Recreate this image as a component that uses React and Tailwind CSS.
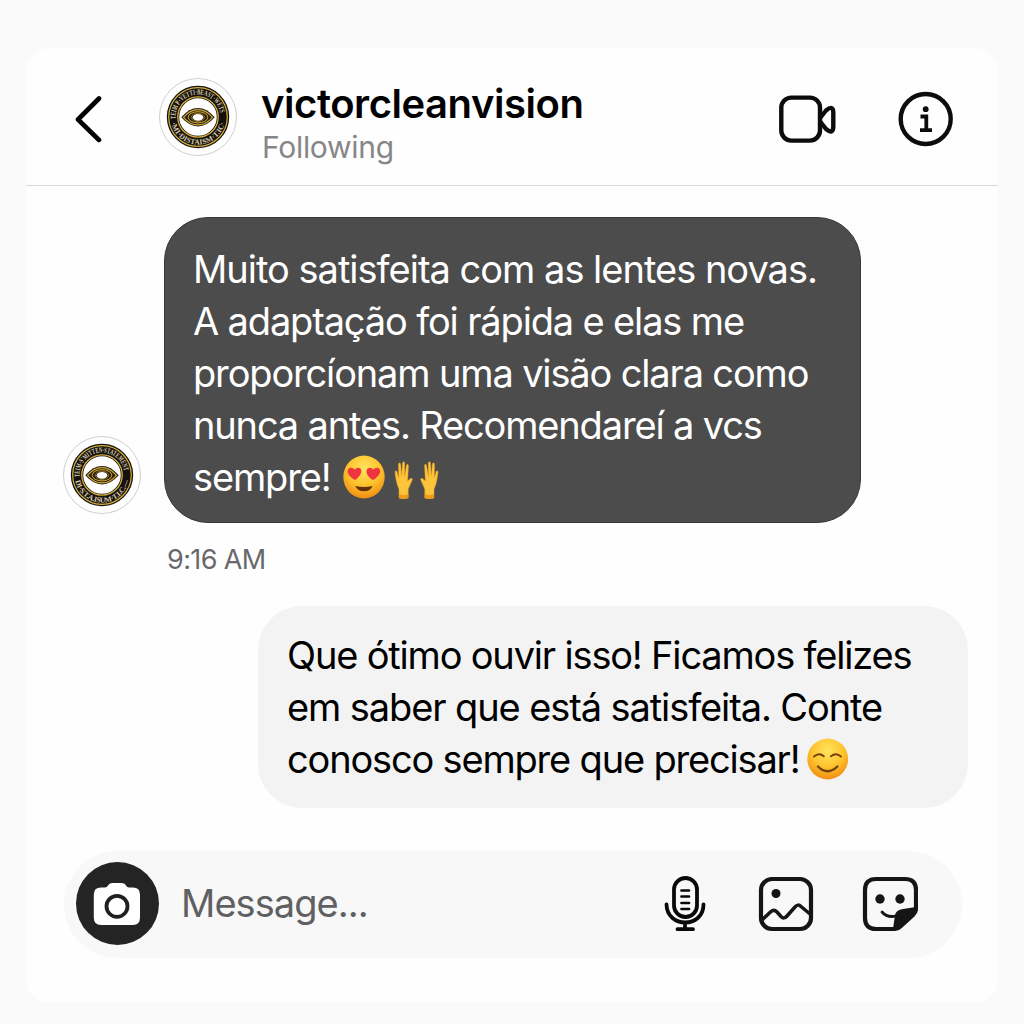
function Seal({ id, top, bottom }) {
  return (
    <svg viewBox="0 0 78 78" className="block size-[78px] shrink-0">
      <circle cx="39" cy="39" r="38.5" fill="#fefefe" stroke="#cfcfd1" strokeWidth="1" />
      <circle cx="39" cy="39" r="25" fill="none" stroke="#15120d" strokeWidth="12.4" />
      <circle cx="39" cy="39" r="29.3" fill="none" stroke="#d6b142" strokeWidth="1.2" />
      <circle cx="39" cy="39" r="20.2" fill="none" stroke="#d6b142" strokeWidth="1.3" />
      <path id={id + "t"} d="M16.700 41 A22.400 22.400 0 1 1 61.300 41" fill="none" />
      <path id={id + "b"} d="M12.300 45 A27.300 27.300 0 0 0 65.700 45" fill="none" />
      <g fill="#dccdb0" fontFamily="Liberation Serif, serif" fontWeight="700" fontSize="7.600">
        <text><textPath href={"#" + id + "t"} textLength="68" lengthAdjust="spacingAndGlyphs">{top}</textPath></text>
        <text><textPath href={"#" + id + "b"} textLength="74" lengthAdjust="spacing">{bottom}</textPath></text>
      </g>
      <path d="M22.300 39.300Q30 30 39 30T55.700 39.300Q48 48.400 39 48.400T22.300 39.300Z" fill="#2a210d" />
      <path d="M24.500 39.300Q31 31.600 39 31.600T53.500 39.300Q47 46.900 39 46.900T24.500 39.300Z" fill="none" stroke="#d0a93c" strokeWidth="1.100" />
      <ellipse cx="39" cy="39.300" rx="9.800" ry="5.600" fill="none" stroke="#d0a93c" strokeWidth="1" />
      <ellipse cx="39" cy="39.300" rx="6.600" ry="4.100" fill="none" stroke="#a98426" strokeWidth=".8" />
      <ellipse cx="39" cy="39.300" rx="5.300" ry="3.400" fill="#fff" />
    </svg>
  );
}

function FaceGradient({ id }) {
  return (
    <defs>
      <radialGradient id={id} cx="0.5" cy="0.3" r="0.72">
        <stop offset="0" stopColor="#ffe45e" />
        <stop offset="0.55" stopColor="#fdc32d" />
        <stop offset="1" stopColor="#f08a12" />
      </radialGradient>
    </defs>
  );
}

function HeartEyes() {
  return (
    <svg viewBox="0 0 42 44" className="h-11 w-[42px]">
      <FaceGradient id="face1" />
      <ellipse cx="21" cy="22" rx="20.7" ry="21.5" fill="url(#face1)" />
      <g fill="#f0343f">
        <path d="M12 25C8 23 3.300 18.500 5 14.800C6.500 12 10 12.300 11.700 14.800C14 12 17.500 12.300 18.200 15.200C19 19 15 23 12 25Z" />
        <path d="M30 25C26 23 22.500 18.500 23.800 15C25 12 29 12.300 30.300 14.800C32.500 12 36 12.300 37 15C38 19 33.500 23 30 25Z" />
      </g>
      <path d="M12.300 31Q21 33 29.600 31Q27.500 36.300 21 36.300T12.300 31Z" fill="#623009" />
    </svg>
  );
}

function Hand({ flip }) {
  return (
    <svg viewBox="0 0 19 38" className={flip ? "h-[38px] w-[19px] -scale-x-100" : "h-[38px] w-[19px]"}>
      <path d="M5 37V28C3 24 2 19 1 11.500C.8 9.500 2.500 9.300 3 11L4.700 17L4.500 3.500C4.500 1.500 6.500 1.500 6.700 3.500L7.600 15L8.600 2C8.800 .2 10.700 .5 10.700 2.300L10.600 15.500L12.500 4.500C12.900 2.700 14.600 3.200 14.400 5L13.600 20L15.800 18C17.500 16.600 19 17.700 18 19.500L14.200 28V37Q9.500 38.500 5 37Z" fill="#fcc43a" stroke="#f0a21f" strokeWidth=".5" />
      <path d="M5 33Q10 35 14.200 33V37Q9.500 38.500 5 37Z" fill="#ee9c1c" />
    </svg>
  );
}

function Smile() {
  return (
    <svg viewBox="0 0 42 42" className="size-[42px]">
      <FaceGradient id="face2" />
      <circle cx="20.700" cy="21" r="20.400" fill="url(#face2)" />
      <g fill="none" stroke="#74400c" strokeWidth="1.900" strokeLinecap="round">
        <path d="M7 18.500Q12 14 16.800 18.300M24 18.300Q29 14 34 18.500" />
        <path d="M11 28.500Q20.500 38 30.300 28.500" strokeWidth="2.400" />
      </g>
    </svg>
  );
}

function Line({ children }) {
  return <div className="flex h-[52px] items-center whitespace-pre">{children}</div>;
}

export default function App() {
  return (
    <main className="flex h-[1024px] w-[1024px] bg-[#fafafa] pt-12 pl-[26px] font-['Inter',sans-serif] text-black">
      <section className="flex h-[955px] w-[972px] flex-col rounded-[24px] bg-[#fefefe]">
        <header className="flex h-[138px] shrink-0 items-start border-b border-[#d6d6d8]">
          <svg viewBox="0 0 28 48" className="mt-[47px] ml-[49px] h-12 w-7" fill="none" stroke="#000" strokeWidth="4.600" strokeLinecap="round" strokeLinejoin="round">
            <path d="M24 3.500L3 24.500L24 45" />
          </svg>
          <div className="mt-[30px] ml-14 w-[102px]"><Seal id="head" top="TEIM P·VETTI·BEAST·WETS" bottom="·MI·DISTAISM·T.IC·" /></div>
          <div className="mt-[31px] w-[518px]">
            <h1 className="h-[49px] text-[40px] leading-[49px] font-semibold tracking-[-0.45px]">victorcleanvision</h1>
            <p className="pl-px text-[30px] leading-[38px] tracking-[-0.3px] text-[#868688]">Following</p>
          </div>
          <svg viewBox="0 0 58 50" className="mt-[47px] h-[50px] w-[58px]" fill="none" stroke="#0b0c0e" strokeWidth="4.400" strokeLinejoin="round">
            <rect x="2.300" y="2.600" width="38.700" height="43" rx="10" />
            <path d="M41.500 22.500L47 15.500Q54.300 9.500 54.300 17.500V31.500Q54.300 40 47 34L41.500 27" />
          </svg>
          <svg viewBox="0 0 56 56" className="mt-[43px] ml-[61px] size-14">
            <circle cx="27.700" cy="28" r="25" fill="none" stroke="#0b0c0e" strokeWidth="4.400" />
            <circle cx="27.700" cy="18.200" r="2.900" fill="#0b0c0e" />
            <path d="M22.500 25.500H28.300V39M22 39.200H34" fill="none" stroke="#0b0c0e" strokeWidth="3.800" />
          </svg>
        </header>

        <div className="mt-[31px] ml-[37px] flex items-end gap-[23px]">
          <div className="mb-[9px]"><Seal id="chat" top="TEIM·S'MITTEN·STATEMENT" bottom="DI·S.T.A.ISUM·T.I.C.—" /></div>
          <div className="h-[306px] w-[697px] rounded-[44px] border border-[#373737] bg-[#4c4c4c] pt-[25px] pl-[28px] text-[38px] tracking-[-1.15px] text-white">
            <div className="tracking-[-1px]"><Line>Muito satisfeita com as lentes novas.</Line></div>
            <Line>A adaptação foi rápida e elas me</Line>
            <Line>proporcíonam uma visão clara como</Line>
            <Line>nunca antes. Recomendareí a vcs</Line>
            <Line><span className="w-[150px]">sempre!</span><HeartEyes /><span className="ml-[9px] flex gap-[7px] pt-[6px]"><Hand /><Hand flip /></span></Line>
          </div>
        </div>
        <time className="mt-[18px] ml-[141px] h-[37px] text-[27px] leading-[38px] tracking-[-0.6px] text-[#68686a]">9:16 AM</time>

        <div className="mt-[28px] ml-[232px] h-[202px] w-[710px] shrink-0 rounded-[44px] bg-[#f3f3f3] pt-[23px] pl-[29px] text-[38px] tracking-[-1.18px]">
          <Line>Que ótimo ouvir isso! Ficamos felizes</Line>
          <div className="tracking-[-1.1px]"><Line>em saber que está satisfeita. Conte</Line></div>
          <Line><span className="w-[520px]">conosco sempre que precisar!</span><Smile /></Line>
        </div>

        <div className="mt-[43px] ml-[38px] flex h-[107px] w-[898px] shrink-0 items-center rounded-full bg-[#f8f8f8] pb-[2px] pl-3">
          <div className="flex size-[83px] items-center justify-center rounded-full bg-[#242424]">
            <svg viewBox="0 0 48 44" className="mr-px h-11 w-12">
              <path d="M8 5.500H12Q14 5.500 15 3.500Q16 1 19 1H29Q32 1 33 3.500Q34 5.500 36 5.500H40Q47 5.500 47 12.500V35.500Q47 43 40 43H8Q.8 43 .8 35.500V12.500Q.8 5.500 8 5.500Z" fill="#fff" />
              <circle cx="24" cy="24.300" r="10.500" fill="#fff" stroke="#202020" strokeWidth="3.800" />
            </svg>
          </div>
          <span className="ml-[22px] w-[483px] text-[38px] tracking-[-0.95px] text-[#606062]">Message...</span>
          <svg viewBox="0 0 42 58" className="h-[58px] w-[42px]" fill="none" stroke="#090909" strokeWidth="3.800" strokeLinecap="round">
            <rect x="10" y="3" width="23" height="39" rx="11.500" />
            <path d="M2.500 29.500C3 53.500 39.500 53.500 39.500 29.500M21 48V54M13.500 54.200H29" />
            <path d="M17.500 15.500H25M17.500 21.500H25M17.500 28H25M17.500 34H25" strokeWidth="2.700" />
          </svg>
          <svg viewBox="0 0 56 56" className="ml-[52px] size-14" fill="none" stroke="#151515" strokeWidth="4.200" strokeLinejoin="round">
            <rect x="3" y="3" width="50" height="50" rx="11" />
            <circle cx="18" cy="17.500" r="4.500" fill="#151515" stroke="none" />
            <path d="M4 44L13 35.500Q16 33 19 36L23 40.500Q26 43.500 29 40L37 31Q40 27.500 43 30.500L52 38" strokeWidth="3.500" />
          </svg>
          <svg viewBox="0 0 56 56" className="ml-12 size-14" fill="none" stroke="#151515" strokeWidth="4.200" strokeLinejoin="round">
            <path d="M33 53H14Q3 53 3 42V14Q3 3 14 3H43Q54 3 54 14V33Q54 36 51 39L39 50Q36 53 33 53Z" />
            <path d="M31 53L33 39Q34 34 41 33L54 31V35L51 39L39 50Z" fill="#151515" stroke="none" />
            <circle cx="18" cy="23" r="4.700" fill="#151515" stroke="none" />
            <circle cx="38" cy="23" r="4.700" fill="#151515" stroke="none" />
            <path d="M20 36Q25 42 34 40" strokeWidth="2.800" strokeLinecap="round" />
          </svg>
        </div>
      </section>
    </main>
  );
}
